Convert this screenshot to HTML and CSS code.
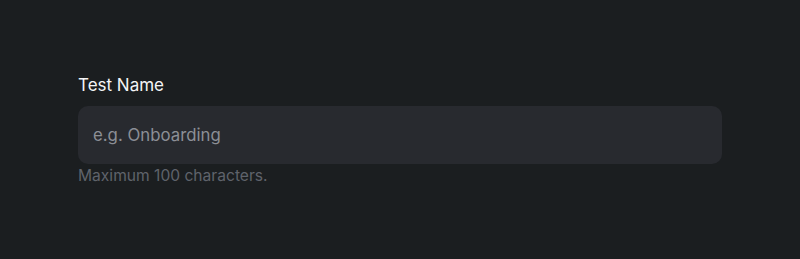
FILE: index.html
```html
<!DOCTYPE html>
<html>
<head>
<meta charset="utf-8">
<link rel="stylesheet" href="styles.css">
</head>
<body>
<div class="field">
  <label class="label" for="tn">Test Name</label>
  <input id="tn" class="input" type="text" placeholder="e.g. Onboarding">
  <p class="hint">Maximum 100 characters.</p>
</div>
</body>
</html>
```
FILE: styles.css
```css
html, body {
  margin: 0;
  padding: 0;
  background: #1b1e20;
  font-family: Inter, "Noto Sans", sans-serif;
}
.field {
  display: flex;
  flex-direction: column;
  padding: 73px 78px 0 78px;
  width: 644px;
}
.label {
  color: #f4f5f6;
  font-size: 17px;
  font-weight: 400;
  line-height: 24px;
  margin-bottom: 9px;
}
.input {
  box-sizing: border-box;
  height: 58px;
  border: none;
  outline: none;
  border-radius: 10px;
  background: #282a2f;
  color: #e5e6e8;
  font-family: inherit;
  font-size: 16.8px;
  padding: 0 15px;
}
.input::placeholder {
  color: #8c8f96;
}
.hint {
  margin: 2px 0 0 0;
  color: #5f636b;
  font-size: 15.6px;
  line-height: 20px;
}
```
